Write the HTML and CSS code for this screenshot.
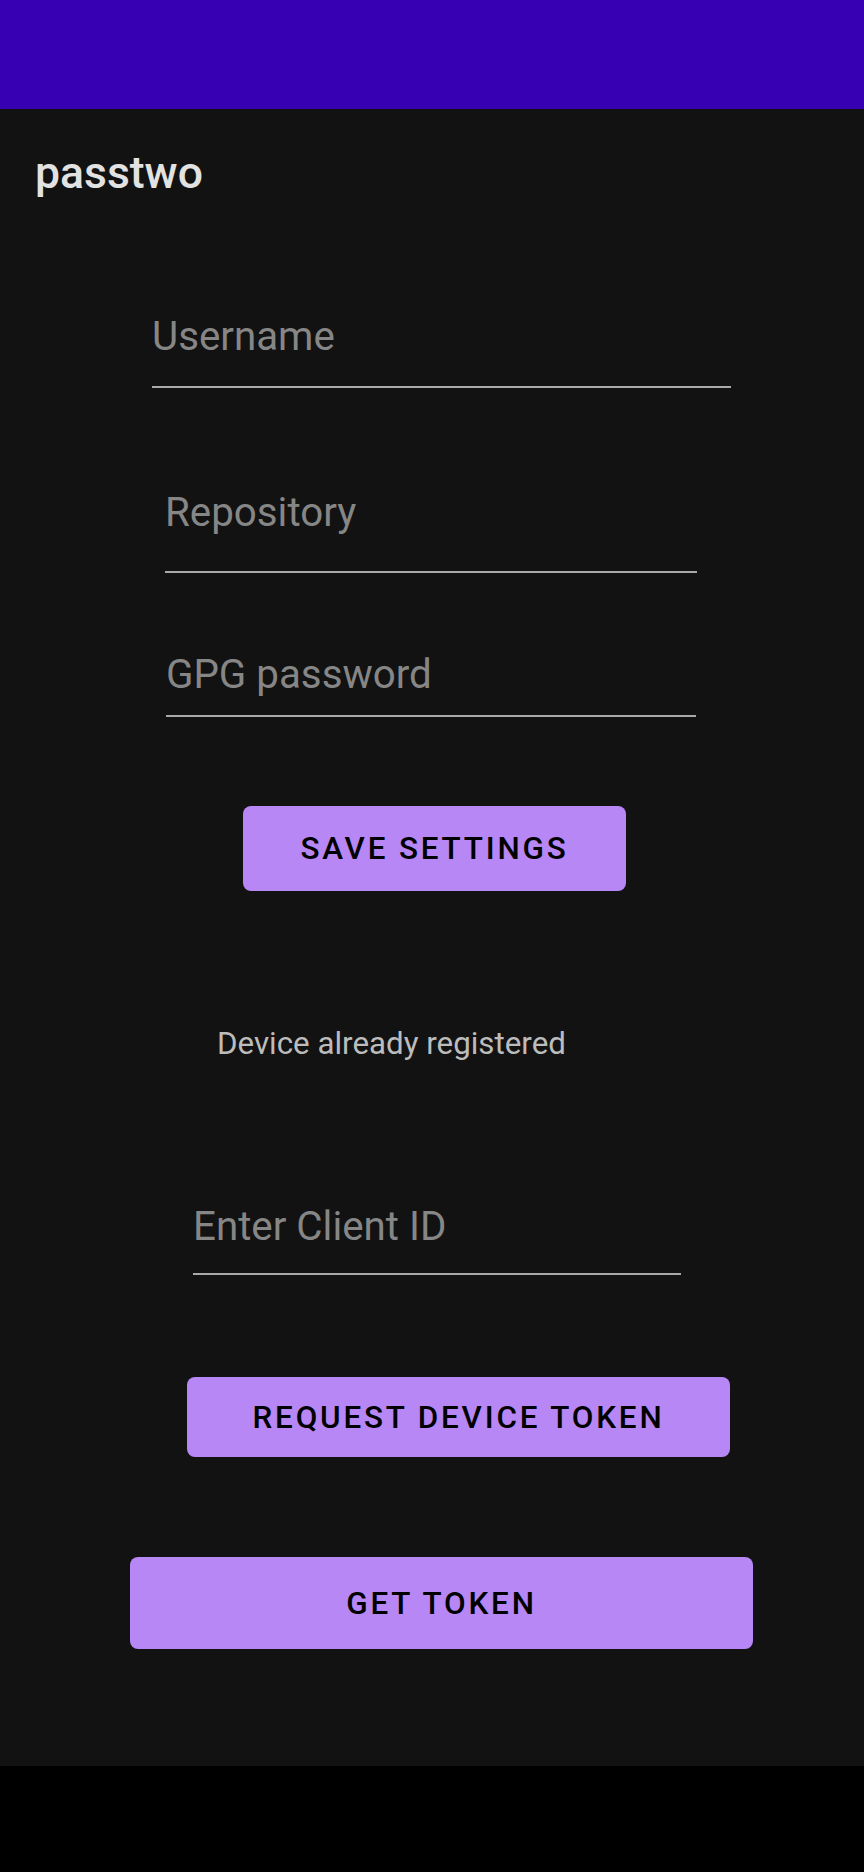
FILE: index.html
```html
<!DOCTYPE html>
<html>
<head>
<meta charset="utf-8">
<link rel="stylesheet" href="styles.css">
</head>
<body>
<div class="screen">
  <div class="status-bar"></div>
  <div class="app">
    <div class="title">passtwo</div>
    <div class="field field-user"><span class="hint">Username</span></div>
    <div class="field field-repo"><span class="hint">Repository</span></div>
    <div class="field field-gpg"><span class="hint">GPG password</span></div>
    <div class="btn btn-save">SAVE SETTINGS</div>
    <div class="status-text">Device already registered</div>
    <div class="field field-client"><span class="hint">Enter Client ID</span></div>
    <div class="btn btn-request">REQUEST DEVICE TOKEN</div>
    <div class="btn btn-get">GET TOKEN</div>
  </div>
  <div class="nav-bar"></div>
</div>
</body>
</html>
```

FILE: styles.css
```css
html, body {
  margin: 0;
  padding: 0;
  background: #000;
}
body {
  font-family: Roboto, "Noto Sans", sans-serif;
}
.screen {
  width: 864px;
  height: 1872px;
  display: flex;
  flex-direction: column;
}
.status-bar {
  height: 109px;
  background: #3700b3;
  flex: none;
}
.app {
  flex: 1;
  background: #121212;
  display: flex;
  flex-direction: column;
  align-items: flex-start;
}
.nav-bar {
  height: 106px;
  background: #000;
  flex: none;
}
.title {
  margin-top: 38px;
  margin-left: 35px;
  font-size: 44.5px;
  line-height: 52px;
  font-weight: 500;
  color: #e2e2e2;
}
.field {
  box-sizing: content-box;
  border-bottom: 2px solid #a9a9a9;
  font-size: 40.3px;
  line-height: 48px;
  color: #868686;
}
.hint {
  display: block;
  margin-left: 0;
}
.field-user {
  margin-top: 114px;
  margin-left: 152px;
  width: 579px;
  padding-bottom: 25px;
}
.field-repo {
  margin-top: 101px;
  margin-left: 165px;
  width: 532px;
  padding-bottom: 34px;
}
.field-gpg {
  margin-top: 78px;
  margin-left: 166px;
  width: 530px;
  padding-bottom: 16px;
}
.field-client {
  margin-top: 139px;
  margin-left: 193px;
  width: 488px;
  padding-bottom: 22px;
}
.btn {
  background: #b687f5;
  color: #000;
  border-radius: 8px;
  font-size: 31.4px;
  font-weight: 500;
  letter-spacing: 0.09em;
  display: flex;
  align-items: center;
  justify-content: center;
  box-sizing: border-box;
}
.btn-save {
  margin-top: 89px;
  margin-left: 243px;
  width: 383px;
  height: 85px;
}
.status-text {
  margin-top: 133px;
  margin-left: 217px;
  font-size: 31.3px;
  line-height: 40px;
  color: #bcbcbc;
}
.btn-request {
  margin-top: 102px;
  margin-left: 187px;
  width: 543px;
  height: 80px;
}
.btn-get {
  margin-top: 100px;
  margin-left: 130px;
  width: 623px;
  height: 92px;
}
```
